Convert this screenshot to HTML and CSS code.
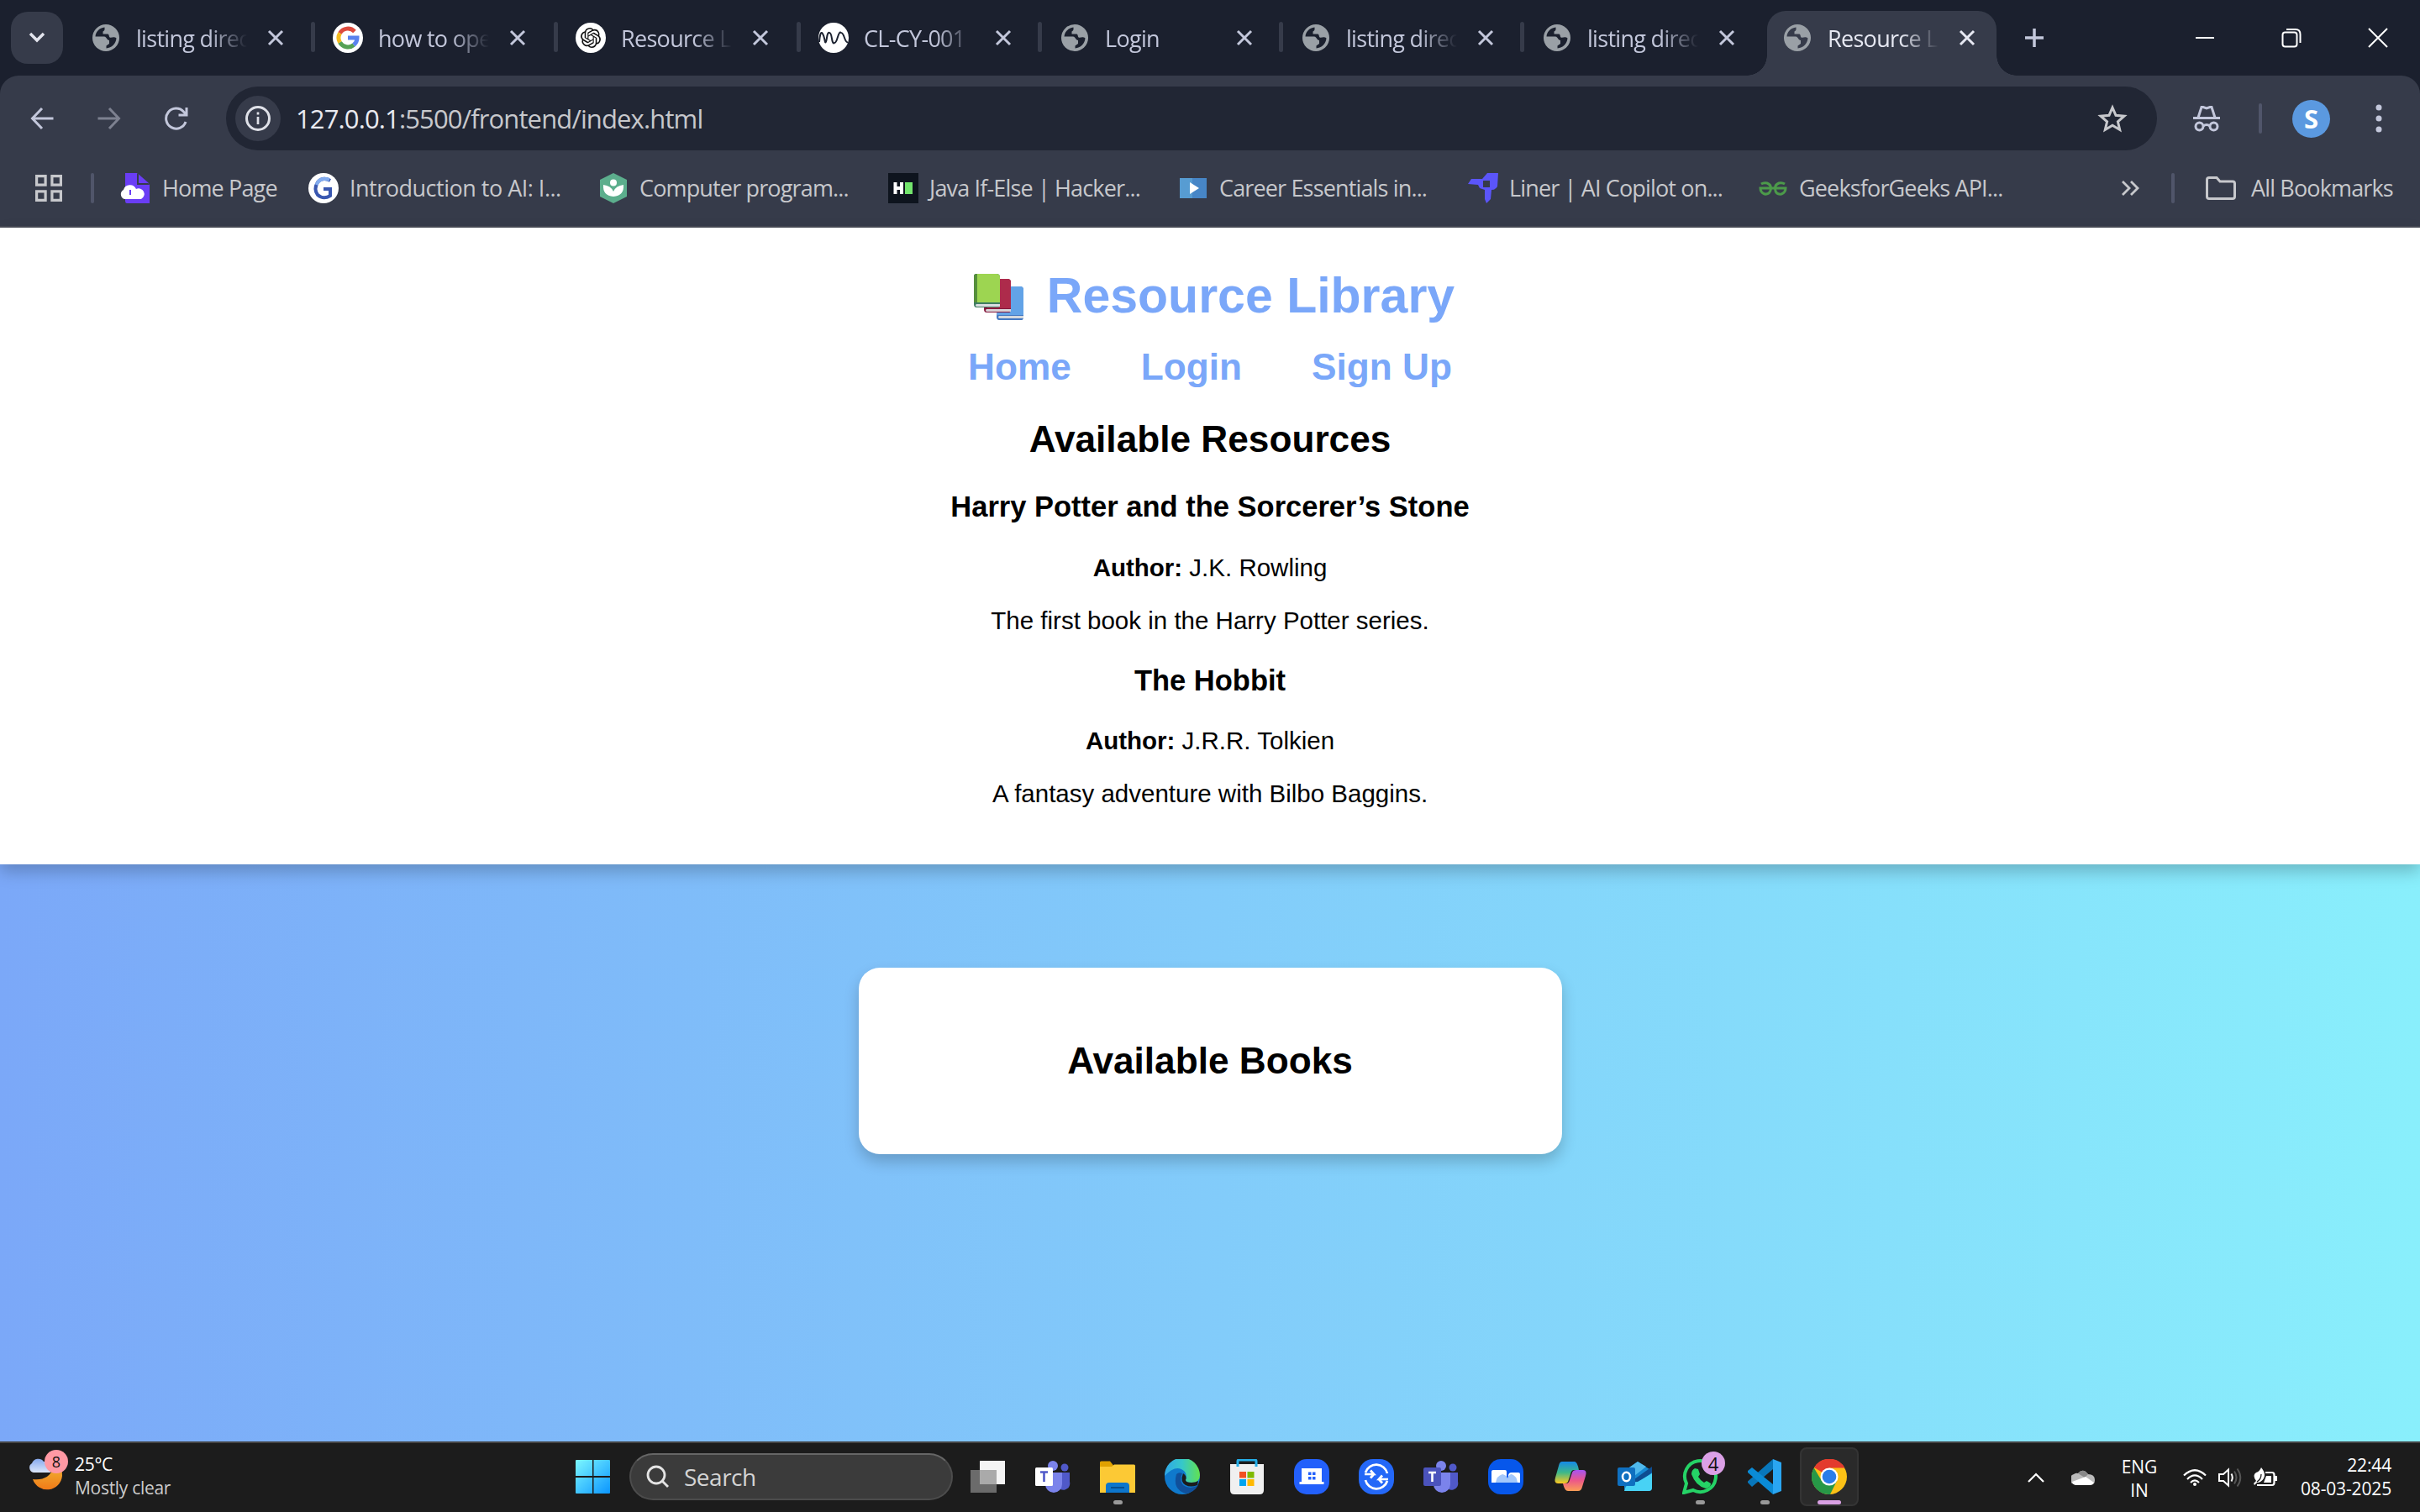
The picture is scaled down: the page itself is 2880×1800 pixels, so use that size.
FILE: index.html
```html
<!DOCTYPE html>
<html lang="en">
<head>
<meta charset="utf-8">
<title>Resource Library</title>
<link rel="stylesheet" href="styles.css">
</head>
<body>
<svg class="defs" aria-hidden="true">
  <symbol id="globe" viewBox="0 0 32 32"><circle cx="16" cy="16" r="16" fill="#9aa0a6"/><path d="M3.500 14.500C4 8.500 8 4.500 14.500 3.500C14.500 6 15 7 12.500 8.500V11.500H18.500C20 12 19.500 14.500 20.500 15.500C23 16.500 25 14 28.500 16.500C28 23 23 28 16.500 28.500V25.500L20 23V19C17 19 17.500 15 14 14.500Z" fill="currentColor"/></symbol>
  <symbol id="close" viewBox="0 0 20 20"><path d="M2 2L18 18M18 2L2 18" stroke="currentColor" stroke-width="3" fill="none"/></symbol>
  <symbol id="teams" viewBox="0 0 42 42"><circle cx="35" cy="10" r="4.500" fill="#5059c9"/><path d="M26 16H41V27a7 7 0 0 1-15 4Z" fill="#5059c9"/><circle cx="21" cy="8" r="6" fill="#7b83eb"/><path d="M12 16H32V30a10 10 0 0 1-20 0Z" fill="#7b83eb"/></symbol>
</svg>

<header class="tabstrip">
  <div class="tab-search"><svg width="20" height="14" viewBox="0 0 20 14"><path d="M2 2l8 8 8-8" fill="none" stroke="#e3e5ee" stroke-width="3.500"/></svg></div>
  <nav class="tabs">
    <div class="tab first"><svg class="globe"><use href="#globe"/></svg><span class="label">listing direc</span><svg class="x"><use href="#close"/></svg></div>
    <div class="tab wide"><svg class="fav" viewBox="0 0 36 36"><circle cx="18" cy="18" r="18" fill="#fff"/><g fill="none" stroke-width="5"><path d="M26 10.500A11 11 0 0 0 8.500 12.500" stroke="#dd4b3e"/><path d="M8.500 12.500A11 11 0 0 0 8.500 23.500" stroke="#f5bb1f"/><path d="M8.500 23.500A11 11 0 0 0 25 26.500" stroke="#55a155"/><path d="M25 26.500Q29 23 29 18H18" stroke="#5a82ee"/></g></svg><span class="label">how to ope</span><svg class="x"><use href="#close"/></svg></div>
    <div class="tab wide"><svg class="fav" viewBox="0 0 36 36"><circle cx="18" cy="18" r="18" fill="#fff"/><path transform="translate(6 6)" fill="#111" d="M22.2819 9.8211a5.9847 5.9847 0 0 0-.5157-4.9108 6.0462 6.0462 0 0 0-6.5098-2.9A6.0651 6.0651 0 0 0 4.9807 4.1818a5.9847 5.9847 0 0 0-3.9977 2.9 6.0462 6.0462 0 0 0 .7427 7.0966 5.98 5.98 0 0 0 .511 4.9107 6.051 6.051 0 0 0 6.5146 2.9001A5.9847 5.9847 0 0 0 13.2599 24a6.0557 6.0557 0 0 0 5.7718-4.2058 5.9894 5.9894 0 0 0 3.9977-2.9001 6.0557 6.0557 0 0 0-.7475-7.0729zm-9.022 12.6081a4.4755 4.4755 0 0 1-2.8764-1.0408l.1419-.0804 4.7783-2.7582a.7948.7948 0 0 0 .3927-.6813v-6.7369l2.02 1.1686a.071.071 0 0 1 .038.052v5.5826a4.504 4.504 0 0 1-4.4945 4.4944zm-9.6607-4.1254a4.4708 4.4708 0 0 1-.5346-3.0137l.142.0852 4.783 2.7582a.7712.7712 0 0 0 .7806 0l5.8428-3.3685v2.3324a.0804.0804 0 0 1-.0332.0615L9.74 19.9502a4.4992 4.4992 0 0 1-6.1408-1.6464zM2.3408 7.8956a4.485 4.485 0 0 1 2.3655-1.9728V11.6a.7664.7664 0 0 0 .3879.6765l5.8144 3.3543-2.0201 1.1685a.0757.0757 0 0 1-.071 0l-4.8303-2.7865A4.504 4.504 0 0 1 2.3408 7.8956zm16.5963 3.8558L13.1038 8.364 15.1192 7.2a.0757.0757 0 0 1 .071 0l4.8303 2.7913a4.4944 4.4944 0 0 1-.6765 8.1042v-5.6772a.79.79 0 0 0-.407-.667zm2.0107-3.0231l-.142-.0852-4.7735-2.7818a.7759.7759 0 0 0-.7854 0L9.409 9.2297V6.8974a.0662.0662 0 0 1 .0284-.0615l4.8303-2.7866a4.4992 4.4992 0 0 1 6.6802 4.66zM8.3065 12.863l-2.02-1.1638a.0804.0804 0 0 1-.038-.0567V6.0742a4.4992 4.4992 0 0 1 7.3757-3.4537l-.142.0805L8.704 5.459a.7948.7948 0 0 0-.3927.6813zm1.0976-2.3654l2.602-1.4998 2.6069 1.4998v2.9994l-2.5974 1.4997-2.6067-1.4997Z"/></svg><span class="label">Resource Li</span><svg class="x"><use href="#close"/></svg></div>
    <div class="tab"><svg class="fav" viewBox="0 0 36 36"><circle cx="18" cy="18" r="18" fill="#fff"/><path d="M1 23Q2 11 4 12T8 23Q9 25 10 18T13 12Q15 12 16 19T19 24Q21 24 23 17T27 12Q29 12 31 18T35 23" fill="none" stroke="#1c2230" stroke-width="2"/></svg><span class="label">CL-CY-001</span><svg class="x"><use href="#close"/></svg></div>
    <div class="tab"><svg class="globe"><use href="#globe"/></svg><span class="label">Login</span><svg class="x"><use href="#close"/></svg></div>
    <div class="tab"><svg class="globe"><use href="#globe"/></svg><span class="label">listing direc</span><svg class="x"><use href="#close"/></svg></div>
    <div class="tab last"><svg class="globe"><use href="#globe"/></svg><span class="label">listing direc</span><svg class="x"><use href="#close"/></svg></div>
    <div class="tab active"><svg class="globe"><use href="#globe"/></svg><span class="label">Resource L</span><svg class="x"><use href="#close"/></svg></div>
  </nav>
  <svg class="newtab" width="24" height="24" viewBox="0 0 24 24"><path d="M12 1V23M1 12H23" stroke="#c3c7db" stroke-width="3.500"/></svg>
  <div class="window-controls">
    <svg width="24" height="24" viewBox="0 0 24 24"><path d="M1 12H23" stroke="#fff" stroke-width="2"/></svg>
    <svg width="24" height="24" viewBox="0 0 24 24" fill="none" stroke="#fff" stroke-width="2"><rect x="1.500" y="5.500" width="17" height="17" rx="3"/><path d="M6 2H17Q22.500 2 22.500 8V18"/></svg>
    <svg width="24" height="24" viewBox="0 0 24 24"><path d="M1 1L23 23M23 1L1 23" stroke="#fff" stroke-width="2"/></svg>
  </div>
</header>

<section class="toolbar">
  <div class="nav-row">
    <div class="nav-icons">
      <svg width="28" height="28" viewBox="0 0 28 28" fill="none" stroke="#c3c7db" stroke-width="3"><path d="M14 2L2.500 14L14 26M3 14H27.500"/></svg>
      <svg width="28" height="28" viewBox="0 0 28 28" fill="none" stroke="#7d8190" stroke-width="3"><path d="M14 2L25.500 14L14 26M25 14H.5"/></svg>
      <svg width="28" height="28" viewBox="0 0 28 28" fill="none" stroke="#c3c7db" stroke-width="3"><path d="M25 18A12 12 0 1 1 22.500 6L26 9.500M26 1V10H16.500"/></svg>
    </div>
    <div class="omnibox">
      <div class="site-info"><svg width="30" height="30" viewBox="0 0 30 30"><circle cx="15" cy="15" r="13.500" fill="none" stroke="#dfe1e8" stroke-width="3"/><path d="M15 13V22M15 7.500V10.500" stroke="#dfe1e8" stroke-width="2.700"/></svg></div>
      <span class="url"><b>127.0.0.1</b>:5500/frontend/index.html</span>
      <svg class="star" width="36" height="34" viewBox="0 0 36 34"><path d="M18 4L22 13.300L32 14.200L24.400 20.800L26.700 30.500L18 25.300L9.300 30.500L11.600 20.800L4 14.200L14 13.300Z" fill="none" stroke="#c7c8cc" stroke-width="3"/></svg>
    </div>
    <svg class="incognito" width="34" height="32" viewBox="0 0 34 32" fill="none" stroke="#c3c7db" stroke-width="3"><path d="M1 15.500H33M7 15L11 2.500H13L17 4L21 2.500H23L27 15"/><circle cx="8.500" cy="25.500" r="4.500"/><circle cx="25.500" cy="25.500" r="4.500"/><path d="M13 25Q17 22 21 25"/></svg>
    <i class="sep"></i>
    <div class="avatar">S</div>
    <svg class="dots" width="8" height="34" viewBox="0 0 8 34" fill="#c3c7db"><circle cx="4" cy="4" r="3.500"/><circle cx="4" cy="17" r="3.500"/><circle cx="4" cy="30" r="3.500"/></svg>
  </div>
  <div class="bookmarks">
    <svg class="apps" width="32" height="32" viewBox="0 0 32 32" fill="none" stroke="#c7c8cc" stroke-width="3.200"><path d="M1.600 1.600h10.500v10.500H1.600zM19.900 1.600h10.500v10.500H19.900zM1.600 19.900h10.500v10.500H1.600zM19.900 19.900h10.500v10.500H19.900z"/></svg>
    <i class="sep"></i>
    <div class="bm b1"><svg viewBox="0 0 36 36"><path d="M7 0H21L36 14V36H9Q7 36 7 33Z" fill="#6a3df5"/><path d="M21 0V14H36Z" fill="#363b4a"/><path d="M23 1.500V12H35Z" fill="#6a3df5"/><path d="M6 31a6 6 0 0 1-1-11 8 8 0 0 1 15-1 6 6 0 0 1 6 12Z" fill="#fff"/><path d="M13 20v6" stroke="#6a3df5" stroke-width="2"/></svg><span>Home Page</span></div>
    <div class="bm b2"><svg viewBox="0 0 36 36"><circle cx="18" cy="18" r="18" fill="#fff"/><path d="M26 9Q17 4 11 11Q6 19 11 26Q18 32 26 27V19H18" fill="none" stroke="#3957b0" stroke-width="4"/><path d="M25 8Q14 4 9.500 14" stroke="#82abee" stroke-width="4" fill="none"/></svg><span>Introduction to AI: I...</span></div>
    <div class="bm b3"><svg viewBox="0 0 36 36"><path d="M18 0L34 8V28L18 36L2 28V8Z" fill="#5cae8d"/><circle cx="18" cy="11.500" r="4" fill="#fff"/><path d="M6 14Q15 15 18 22Q21 15 30 14Q31 27 18 28Q5 27 6 14Z" fill="#fff"/></svg><span>Computer program...</span></div>
    <div class="bm b4"><svg viewBox="0 0 36 36"><path d="M0 0H36V36H0Z" fill="#0e141e"/><path d="M8.500 11V25M16 11V25M8 18H17" stroke="#fff" stroke-width="4"/><path d="M20 11h9v14h-9z" fill="#73e56d"/></svg><span>Java If-Else | Hacker...</span></div>
    <div class="bm b5"><svg viewBox="0 0 36 36"><path d="M2 6H34V30H2Z" fill="#4786c7"/><path d="M2 6h15v24H2z" fill="#579cd2"/><path d="M14 11L25 18L14 25Z" fill="#fff"/></svg><span>Career Essentials in...</span></div>
    <div class="bm b6"><svg viewBox="0 0 36 36"><path d="M23 0H36L35 16Q33 20 28 20L27 31L22 36L20 31V20L14 18L12 14L0 13L4 7H17Z" fill="#5b55fa"/><path d="M18 9h8v8h-8z" fill="#363b4a"/></svg><span>Liner | AI Copilot on...</span></div>
    <div class="bm b7"><svg viewBox="0 0 36 36" fill="none" stroke="#4c9a4a" stroke-width="3"><path d="M4 13Q7 11 11 12Q16 14 15.500 19Q14 26 8 25Q3 23 3 18H33Q33 23 28 25Q21 26 20.500 19Q20 14 25 12Q29 11 32 13"/></svg><span>GeeksforGeeks API...</span></div>
    <svg class="more" width="22" height="20" viewBox="0 0 22 20" fill="none" stroke="#c7c8cc" stroke-width="2.800"><path d="M2 2l8 8-8 8M12 2l8 8-8 8"/></svg>
    <i class="sep"></i>
    <svg class="folder" width="36" height="28" viewBox="0 0 36 28" fill="none" stroke="#c7c8cc" stroke-width="3"><path d="M1.500 24V4Q1.500 1.500 4 1.500H13L17 6H32Q34.500 6 34.500 8.500V24Q34.500 26.500 32 26.500H4Q1.500 26.500 1.500 24Z"/></svg>
    <span class="all">All Bookmarks</span>
  </div>
</section>

<main class="page">
  <section class="hero">
    <h1><svg class="books" viewBox="0 0 59 55"><g><path d="M30 15h25q4 0 4 4v32q0 4-2 4H30q-3 0-3-4Z" fill="#4378c2"/><path d="M28 15h27q4 0 4 4v30H28z" fill="#62a3e7"/><path d="M30 50h29v3H30q-2-1.500 0-3z" fill="#d3d8de"/></g><g><path d="M14 6h26q4 0 4 4v32q0 4-2 4H15q-3 0-3-4z" fill="#84153a"/><path d="M16 6h24q4 0 4 4v31H16z" fill="#ad2b4b"/><path d="M15 42h29v3H15q-2-1.500 0-3z" fill="#d9d4d8"/></g><g><path d="M3 0h24q4 0 4 4v32q0 4-2 4H3q-3 0-3-4V3q0-3 3-3z" fill="#3f7c62"/><path d="M3 0h4v34H0V3q0-3 3-3z" fill="#568f3c"/><path d="M4 0h23q4 0 4 4v30H4z" fill="#9dd551"/><path d="M3 36h28v3H3q-2-1.500 0-3z" fill="#dadde0"/></g></svg><span>Resource Library</span></h1>
    <nav class="links"><a>Home</a><a>Login</a><a>Sign Up</a></nav>
    <h2>Available Resources</h2>
    <h3>Harry Potter and the Sorcerer’s Stone</h3>
    <p><strong>Author:</strong> J.K. Rowling</p>
    <p>The first book in the Harry Potter series.</p>
    <h3>The Hobbit</h3>
    <p><strong>Author:</strong> J.R.R. Tolkien</p>
    <p>A fantasy adventure with Bilbo Baggins.</p>
  </section>
  <section class="card"><h2>Available Books</h2></section>
</main>

<footer class="taskbar">
  <div class="weather">
    <div class="weather-icon"><svg width="48" height="48" viewBox="0 0 48 48"><defs><linearGradient id="moon" x2="0" y2="1"><stop stop-color="#f0bb38"/><stop offset="1" stop-color="#f07a18"/></linearGradient><linearGradient id="cloud" x2="0" y2="1"><stop stop-color="#86a9ee"/><stop offset="1" stop-color="#dce7fb"/></linearGradient></defs><path d="M32 14Q41 20 40 30A18 18 0 0 1 5 34Q24 36 29 21Z" fill="url(#moon)"/><path d="M6 26A6 6 0 0 1 4 15A8 8 0 0 1 18 13Q26 12 26 26Z" fill="url(#cloud)"/></svg><span class="badge">8</span></div>
    <div class="weather-text"><span>25°C</span><span>Mostly clear</span></div>
  </div>
  <div class="apps-row">
    <svg class="start" viewBox="0 0 42 42"><defs><linearGradient id="win" x2="1" y2="1"><stop stop-color="#7cf7ff"/><stop offset="1" stop-color="#0a95ff"/></linearGradient></defs><path d="M0 2q0-1 1-1h19v19H0zM21.500 1H40q1 0 1 1v18H21.500zM0 22h20v19H1q-1 0-1-1zM21.500 22H41v18q0 1-1 1H21.500z" fill="url(#win)"/></svg>
    <div class="search"><svg width="28" height="28" viewBox="0 0 28 28" fill="none" stroke="#e4e4e4" stroke-width="2.800"><circle cx="12" cy="12" r="10"/><path d="M19 19L26 26"/></svg><span>Search</span></div>
    <div class="app"><svg viewBox="0 0 42 42"><path d="M11 2h30v28H11z" fill="#f4f4f4"/><path d="M0 13h31v27H0z" fill="#6b6b6b"/><path d="M11 13h20v17H11z" fill="#aaa"/></svg></div>
    <div class="app"><svg viewBox="0 0 42 42"><use href="#teams"/><rect y="10" width="21" height="22" rx="1.500" fill="#fff"/><path d="M6 15.500h9M10.500 15.500V27" stroke="#5059c9" stroke-width="2.600"/></svg></div>
    <div class="app running"><svg viewBox="0 0 42 42"><path d="M0 4q0-1.500 1.500-1.500H12l4 5v8H0z" fill="#e0a100"/><path d="M0 9h14l3-2.500h23.500q1.500 0 1.500 1.500v32H0z" fill="#fcc935"/><path d="M7 40V32q0-4 4-4h20q4 0 4 4v8z" fill="#0d76cc"/><path d="M13 34h16" stroke="#064f91" stroke-width="2"/></svg></div>
    <div class="app"><svg viewBox="0 0 42 42"><defs><linearGradient id="edge" x2="1"><stop stop-color="#2fa7e8"/><stop offset=".5" stop-color="#36c8c9"/><stop offset="1" stop-color="#62e150"/></linearGradient></defs><circle cx="21" cy="21" r="21" fill="#0f79cc"/><path d="M0 20A21 21 0 0 1 42 19Q42 28 32 28Q24 28 25 24Q27 20 24 15Q14 5 0 20Z" fill="url(#edge)"/><path d="M14 18Q9 36 25 41Q35 40 40 31Q30 37 22 31Q17 25 21 17Q17 15 14 18Z" fill="#10509b"/><path d="M22 17Q27 20 25 25Q25 28 32 28Q37 28 40 26L39 31Q31 34 25 31Q18 27 22 17Z" fill="#1c1c1c"/></svg></div>
    <div class="app"><svg viewBox="0 0 42 42"><path d="M1 6H41V37q0 5-5 5H6q-5 0-5-5z" fill="#f0f0f0"/><path d="M10 9V2.500q0-1.500 1.500-1.500h19q1.500 0 1.500 1.500V9" fill="none" stroke="#25aee8" stroke-width="3"/><path d="M12 15h8v7.500h-8z" fill="#f25022"/><path d="M21.500 15h8v7.500h-8z" fill="#7fba00"/><path d="M12 24h8v8h-8z" fill="#00a4ef"/><path d="M21.500 24h8v8h-8z" fill="#ffb900"/></svg></div>
    <div class="app"><svg viewBox="0 0 42 42"><rect width="42" height="42" rx="15" fill="#2360fb"/><path d="M9 11h24v16h2.500v3H6.500v-3H9z" fill="#fff"/><path d="M17 15.500h3.500V19H17zM22 15.500h3.500V19H22zM17 21h3.500v3.500H17zM22 21h3.500v3.500H22z" fill="#2360fb"/></svg></div>
    <div class="app"><svg viewBox="0 0 42 42"><rect width="42" height="42" rx="17" fill="#2468f8"/><g fill="none" stroke="#fff" stroke-width="2.700"><path d="M8 16A13.500 13.500 0 0 1 34 17M34 26A13.500 13.500 0 0 1 8 25M7 18H18L14 13.500M18 18L14 22.500M35 24H24L28 19.500M24 24L28 28.500"/></g></svg></div>
    <div class="app"><svg viewBox="0 0 42 42"><use href="#teams"/><rect y="10" width="21" height="22" rx="2" fill="#4b53bc"/><path d="M6 16h9M10.500 16V27" stroke="#fff" stroke-width="2.600"/></svg></div>
    <div class="app"><svg viewBox="0 0 42 42"><rect width="42" height="42" rx="15" fill="#0757eb"/><path d="M4 28V15q0-2 2-2h14q2 0 2 2v13zM24 20q0-4 4-4h8q2 0 2 2v10H24z" fill="#fff"/><path d="M9 28Q10 20 17 18Q22 19 23 23Q25 18 28 18Q34 20 35 28Z" fill="#a4c8fb"/></svg></div>
    <div class="app"><svg viewBox="0 0 42 42"><defs><linearGradient id="cpa" x2="0" y2="1"><stop stop-color="#1589e8"/><stop offset=".5" stop-color="#3db889"/><stop offset="1" stop-color="#ffc81f"/></linearGradient><linearGradient id="cpb" x2="0" y2="1"><stop stop-color="#a554f3"/><stop offset=".5" stop-color="#ec5889"/><stop offset="1" stop-color="#fb9d55"/></linearGradient></defs><path d="M11 3H26Q29 3 31 13H25Q22 13 21 18L18 27Q17 29 14 29H6Q1 29 3 22L7 8Q8 3 11 3Z" fill="url(#cpa)"/><path d="M28 13H36Q41 13 39 20L35 33Q34 38 30 38H18Q14 38 12 29H16Q19 29 20 25L23 16Q24 13 28 13Z" fill="url(#cpb)"/></svg></div>
    <div class="app"><svg viewBox="0 0 42 42"><path d="M8 14L24 3L41 14V34q0 4-4 4H12q-4 0-4-4z" fill="#1689d2"/><path d="M14 10L24 3L34 9L20 20z" fill="#50b9ec"/><path d="M20 24L41 9V16L22 30z" fill="#0e4d90"/><path d="M8 38Q10 27 24 27L41 17V34q0 4-4 4z" fill="#48d2f5"/><rect y="10" width="21" height="22" rx="2" fill="#0f70c0"/><ellipse cx="10.500" cy="21" rx="4.500" ry="5.300" fill="none" stroke="#fff" stroke-width="2.600"/></svg></div>
    <div class="app running"><svg viewBox="0 0 42 42"><path d="M2 40L5 29A18.500 18.500 0 1 1 13 37Z" fill="none" stroke="#25d366" stroke-width="4"/><path d="M15 11l4 1 2 6-2 3q3 5 7 7l3-2 5 3q0 5-6 6Q16 32 11 18q0-5 4-7z" fill="#25d366"/></svg><span class="badge wa">4</span></div>
    <div class="app running"><svg viewBox="0 0 42 42"><path d="M31 0L41 4V38L31 42Z" fill="#2aa6f2"/><path d="M31 0V12L6 33L1 28V26.500Z" fill="#0877bb"/><path d="M31 42V30L6 10L1 14V16Z" fill="#0a8bd6"/></svg></div>
    <div class="app running current"><svg viewBox="0 0 42 42"><circle cx="21" cy="21" r="21" fill="#fbc116"/><path d="M21 21L3 10A21 21 0 0 1 39.500 10.500H21Z" fill="#e33b2e"/><path d="M2.800 10.500A21 21 0 0 0 22 42L30 26L21 21L12 26Z" fill="#279847"/><circle cx="21" cy="21" r="10.500" fill="#fff"/><circle cx="21" cy="21" r="8.300" fill="#2b7de9"/></svg></div>
  </div>
  <div class="tray">
    <svg width="20" height="12" viewBox="0 0 20 12"><path d="M1 11L10 2L19 11" fill="none" stroke="#fff" stroke-width="2.200"/></svg>
    <svg class="onedrive" width="28" height="18" viewBox="0 0 28 18"><path d="M6 17A6 6 0 0 1 3 5Q6 3 8 4Q14-3 20 5Q28 5 28 12Q28 18 22 18H6Z" fill="#bbb"/><path d="M8 4Q14-3 20 5L16 9Z" fill="#888"/><path d="M1 14L17 8L27 15Q25 18 22 18H6Q2 18 1 14Z" fill="#fff"/></svg>
    <div class="lang"><span>ENG</span><span>IN</span></div>
    <svg class="wifi" width="28" height="22" viewBox="0 0 28 22" fill="none" stroke="#fff" stroke-width="2.200"><path d="M1 8.500Q14-4 27 8.500M5 13Q14 4 23 13M9 17Q14 12 19 17"/><circle cx="14" cy="19" r="2" fill="#fff" stroke="none"/></svg>
    <svg class="vol" width="28" height="24" viewBox="0 0 28 24" fill="none" stroke="#fff" stroke-width="2"><path d="M1 8H6L12 2.500V21.500L6 16H1ZM15.500 7.500Q18 12 15.500 16.500"/><g stroke="#555"><path d="M19 4.500Q24 12 19 19.500M22.500 1.500Q30 12 22.500 22.500"/></g></svg>
    <svg class="battery" width="28" height="24" viewBox="0 0 28 24"><path d="M14 6H22Q24.500 6 24.500 9V18Q24.500 21 22 21H4" fill="none" stroke="#fff" stroke-width="2.200"/><path d="M25 10h3v6h-3zM15 10h6v8H12z" fill="#fff"/><path d="M9 0Q15 7 12 13Q9 18 4 18L1 21L0 19L3 16Q-2 9 3 6Q7 5 9 0Z" fill="#fff"/><path d="M4 17Q9 14 9 8" stroke="#1c1c1c" stroke-width="1.300" fill="none"/></svg>
    <div class="clock"><span>22:44</span><span>08-03-2025</span></div>
  </div>
</footer>
</body>
</html>
```
FILE: styles.css
```css
* { box-sizing: border-box; }
body {
  margin: 0;
  width: 2880px;
  height: 1800px;
  overflow: hidden;
  display: flex;
  flex-direction: column;
  background: #1b202e;
  font-family: "Open Sans", "Noto Sans", sans-serif;
}
svg { display: block; flex: none; }
.defs { position: absolute; width: 0; height: 0; }

/* Tab strip */
.tabstrip { height: 90px; flex: none; display: flex; padding-left: 13px; color: #c3c7db; background: #1b202e; }
.tab-search { width: 62px; height: 62px; margin-top: 14px; border-radius: 20px; background: #363b4a; display: flex; align-items: center; justify-content: center; }
.tabs { display: flex; margin-left: 9px; }
.tab { position: relative; width: 287px; height: 90px; display: flex; align-items: center; padding-left: 24px; }
.tab.first { width: 288px; }
.tab.wide { width: 289px; }
.tab:not(.active):not(.last)::after { content: ""; position: absolute; right: -3px; top: 26px; width: 5px; height: 36px; border-radius: 3px; background: #363b4a; }
.fav { width: 36px; height: 36px; }
.globe { width: 32px; height: 32px; margin: 0 2px; color: #1b202e; }
.active .globe { color: #363b4a; }
.label { width: 139px; margin: 2px 0 0 18px; height: 40px; line-height: 40px; font-size: 27px; letter-spacing: -0.7px; white-space: nowrap; mask-image: linear-gradient(90deg, #000 62%, transparent 95%); }
.x { width: 20px; height: 20px; margin-left: 17px; }
.tab.last { width: 292px; }
.tab.active { width: 273px; height: 77px; margin-top: 13px; padding: 0 0 13px 18px; border-radius: 22px 22px 0 0; background: #363b4a; color: #e6e8f2; }
.tab.active::before, .tab.active::after { content: ""; position: absolute; bottom: 0; width: 24px; height: 24px; }
.tab.active::before { left: -24px; background: radial-gradient(circle at 0 0, transparent 23.5px, #363b4a 24px); }
.tab.active::after { right: -24px; background: radial-gradient(circle at 100% 0, transparent 23.5px, #363b4a 24px); }
.newtab { margin: 33px 0 0 33px; }
.window-controls { display: flex; gap: 79px; margin: 33px 38px 0 auto; }

/* Toolbar */
.toolbar { height: 181px; flex: none; background: #363b4a; border-radius: 22px 22px 0 0; border-bottom: 2px solid #474a55; color: #c7c8cc; }
.nav-row { padding-top: 13px; display: flex; align-items: center; height: 89px; }
.nav-icons { display: flex; gap: 52px; margin-left: 36px; }
.omnibox { width: 2298px; height: 76px; margin-left: 45px; border-radius: 38px; background: #212634; display: flex; align-items: center; padding: 0 35px 0 11px; }
.site-info { width: 54px; height: 54px; border-radius: 50%; background: #363b4a; display: flex; align-items: center; justify-content: center; }
.url { margin-left: 18px; font-size: 31px; letter-spacing: -0.87px; line-height: 50px; }
.url b { font-weight: 400; color: #e9eaf0; }
.star { margin-left: auto; }
.incognito { margin-left: 42px; }
.sep { width: 4px; height: 36px; border-radius: 2px; background: #50556a; flex: none; }
.nav-row .sep { margin-left: 45px; }
.avatar { width: 45px; height: 45px; margin-left: 36px; border-radius: 50%; background: #5b99e0; color: #fff; text-align: center; font: 700 31px/45px "Open Sans", sans-serif; }
.dots { margin-left: 54px; }
.bookmarks { height: 90px; display: flex; align-items: center; font-size: 27px; line-height: 40px; white-space: nowrap; }
.apps { margin: 0 34px 0 42px; }
.bm { display: flex; align-items: center; gap: 13px; width: 344px; }
.bm svg { width: 36px; height: 36px; }
.bm.b1 { width: 225px; margin-left: 30px; gap: 15px; }
.bm span, .all { letter-spacing: -0.85px; }
.bm.b2 span { letter-spacing: -0.5px; }
.b2, .b3, .b4, .b5, .b6 { width: 345px; }
.more { margin-left: 88px; }
.more + .sep { margin-left: 38px; }
.folder { margin: 0 18px 0 37px; }

/* Page */
.page { flex: none; height: 1445px; background: linear-gradient(90deg, #7ba8f8, #89effc); font-family: "Liberation Sans", Arial, sans-serif; color: #000; text-align: center; }
.hero { height: 758px; background: #fff; box-shadow: 0 9px 18px rgba(0, 0, 0, .21); padding-top: 48px; }
h1, h2, h3, p { margin: 0; }
h1 { display: flex; justify-content: center; gap: 28px; height: 66px; padding-left: 10px; font-size: 59px; line-height: 66px; color: #7aa7f9; }
.books { width: 59px; height: 55px; margin-top: 7px; }
.links { display: flex; justify-content: center; gap: 83px; margin-top: 27px; font-size: 44.2px; line-height: 50px; font-weight: 700; color: #7aa7f9; }
h2 { font-size: 44.2px; line-height: 50px; }
.hero h2 { margin-top: 36px; }
h3 { font-size: 34.5px; line-height: 38px; margin-top: 36px; }
p { font-size: 29.5px; line-height: 33px; margin-top: 30px; }
h3 + p { margin-top: 36.5px; }
.card { width: 837px; height: 222px; margin: 123px auto 0; border-radius: 25px; background: #fff; box-shadow: 0 9px 18px rgba(0, 0, 0, .2); padding-top: 86px; }

/* Taskbar */
.taskbar { height: 84px; flex: none; border-top: 2px solid #444; background: #1c1c1c; color: #fff; display: grid; grid-template-columns: 685px 1fr auto; font-size: 21px; line-height: 28px; white-space: nowrap; }
.weather { display: flex; padding: 9px 0 0 34px; }
.weather-icon { position: relative; width: 48px; height: 48px; }
.badge { position: absolute; left: 19px; top: -1px; width: 28px; height: 28px; border-radius: 50%; background: #ff99a4; color: #111; text-align: center; font-size: 18px; line-height: 28px; }
.weather-text { display: flex; flex-direction: column; margin: 2px 0 0 7px; letter-spacing: -0.3px; }
.weather-text span + span { color: #ccc; }
.apps-row { display: flex; align-items: center; height: 80px; }
.start { width: 42px; height: 42px; }
.search { width: 385px; height: 56px; margin: 0 7px 0 22px; border: 2px solid #4c4c4c; border-top-color: #666; border-radius: 28px; background: #3b3b3b; display: flex; align-items: center; padding-left: 18px; gap: 17px; font-size: 28px; color: #d4d4d4; letter-spacing: -0.5px; }
.app { position: relative; width: 70px; height: 70px; margin-right: 7px; border-radius: 8px; display: flex; align-items: center; justify-content: center; }
.app > svg { width: 42px; height: 42px; }
.running::after { content: ""; position: absolute; left: 30px; bottom: 2px; width: 11px; height: 5px; border-radius: 3px; background: #999; }
.current { background: #2a2a2a; border: 2px solid #343434; }
.current::after { left: 19px; bottom: 0; width: 28px; background: #d9a0e3; }
.badge.wa { left: 37px; top: 5px; background: #dba0e6; font-size: 22px; }
.tray { display: flex; align-items: center; padding-right: 34px; }
.onedrive { margin-left: 32px; }
.lang, .clock { display: flex; flex-direction: column; }
.lang { align-items: center; margin-left: 33px; width: 40px; padding-top: 1px; }
.wifi { margin-left: 32px; }
.vol, .battery { margin-left: 14px; }
.clock { align-items: flex-end; margin-left: 28px; width: 108px; margin-top: -3px; letter-spacing: -0.15px; }
```
